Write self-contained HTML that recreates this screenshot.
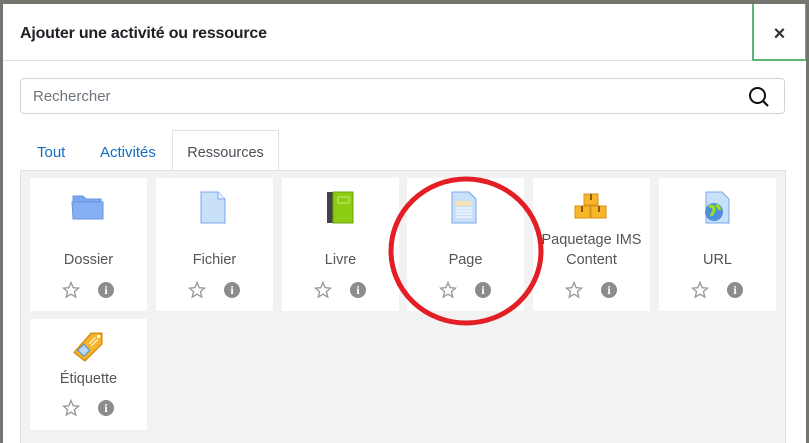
<!DOCTYPE html>
<html><head><meta charset="utf-8"><style>
*{box-sizing:border-box;margin:0;padding:0}
html,body{width:809px;height:443px;overflow:hidden}
body{background:#74756f;font-family:"Liberation Sans",sans-serif;position:relative}
.modal{position:absolute;left:3px;top:4px;width:803px;height:439px;background:#fff;overflow:hidden}
.abs{position:absolute}
.title{left:17px;top:21px;font-size:16px;font-weight:bold;color:#1d2125;letter-spacing:-0.2px}
.hdr{left:0;top:56px;width:803px;height:1px;background:#dee2e6}
.close{left:749px;top:-2px;width:55px;height:59px;border:2px solid #5fb377;font-size:20px;color:#333;text-align:center;line-height:60px;font-weight:bold}
.search{left:17px;top:74px;width:765px;height:36px;border:1px solid #ced4da;border-radius:4px}
.search span{position:absolute;left:12px;top:9px;font-size:15px;color:#6c757d}
.tab{top:129px;height:40px;font-size:15px;color:#0f6cbf;line-height:40px}
.tabA{left:169px;top:126px;width:107px;height:41px;border:1px solid #dee2e6;border-bottom:none;background:#fff;color:#495057;text-align:center;font-size:14.5px;line-height:44px}
.panel{left:17px;top:166px;width:766px;height:290px;background:#f2f2f2;border:1px solid #dee2e6}
.card{position:absolute;width:117px;height:133px;background:#fff}
.card .lbl{position:absolute;left:0;width:100%;text-align:center;font-size:14.5px;color:#555;line-height:20px}
.card .ic{position:absolute;left:42px;top:12px}
.star{position:absolute;top:103px;left:32px}
.info{position:absolute;top:104px;left:68px;width:16px;height:16px;border-radius:50%;background:#8c8c8c;color:#fff;font-size:12px;font-weight:bold;text-align:center;line-height:16px;font-family:"Liberation Serif",serif}
</style></head><body>
<div class="modal">
<div class="abs title">Ajouter une activité ou ressource</div>
<div class="abs hdr"></div>
<div class="abs close">×</div>
<div class="abs search"><span>Rechercher</span>
<svg style="position:absolute;right:14px;top:7px" width="22" height="22" viewBox="0 0 22 22"><circle cx="9.5" cy="9.5" r="7.5" fill="none" stroke="#111" stroke-width="2"/><line x1="15" y1="15" x2="20" y2="20" stroke="#111" stroke-width="2.2"/></svg></div>
<div class="abs tab" style="left:34px">Tout</div>
<div class="abs tab" style="left:97px">Activités</div>
<div class="abs tabA">Ressources</div>
<div class="abs panel"></div>
</div>

<div class="card" style="left:30px;top:178px">
<svg class="ic" style="left:41px;top:15px" width="34" height="28" viewBox="0 0 34 28"><path d="M2 3h10l3 3h15v20H2z" fill="#7aa7ef" stroke="#6a95e0"/><path d="M1 9h31v17H2z" fill="#86b0f3" stroke="#6a95e0"/></svg>
<div class="lbl" style="top:72px">Dossier</div>
<svg class="star" width="18" height="18" viewBox="0 0 24 24"><path d="M12 2l2.9 6.9 7.1.6-5.4 4.7 1.7 7.3L12 17.6 5.7 21.5l1.7-7.3L2 9.5l7.1-.6z" fill="none" stroke="#999" stroke-width="1.8"/></svg><div class="info">i</div></div>

<div class="card" style="left:156px;top:178px">
<svg class="ic" width="32" height="34" viewBox="0 0 32 34"><path d="M3 2h17l7 7v24H3z" fill="#c8e0f8" stroke="#7aa7ef"/><path d="M20 2v7h7" fill="#e6f0fc" stroke="#7aa7ef"/></svg>
<div class="lbl" style="top:72px">Fichier</div>
<svg class="star" width="18" height="18" viewBox="0 0 24 24"><path d="M12 2l2.9 6.9 7.1.6-5.4 4.7 1.7 7.3L12 17.6 5.7 21.5l1.7-7.3L2 9.5l7.1-.6z" fill="none" stroke="#999" stroke-width="1.8"/></svg><div class="info">i</div></div>

<div class="card" style="left:282px;top:178px">
<svg class="ic" width="32" height="34" viewBox="0 0 32 34"><rect x="3" y="2" width="8" height="31" fill="#444"/><rect x="9" y="2" width="20" height="31" fill="#8ccc12" stroke="#6aa50c"/><rect x="14" y="7" width="11" height="6" fill="none" stroke="#c7ef75"/></svg>
<div class="lbl" style="top:72px">Livre</div>
<svg class="star" width="18" height="18" viewBox="0 0 24 24"><path d="M12 2l2.9 6.9 7.1.6-5.4 4.7 1.7 7.3L12 17.6 5.7 21.5l1.7-7.3L2 9.5l7.1-.6z" fill="none" stroke="#999" stroke-width="1.8"/></svg><div class="info">i</div></div>

<div class="card" style="left:407px;top:178px">
<svg class="ic" width="32" height="34" viewBox="0 0 32 34"><path d="M3 2h17l7 7v24H3z" fill="#c8e0f8" stroke="#7aa7ef"/><rect x="7" y="11" width="16" height="5" fill="#f6e3b5"/><path d="M7 18h16M7 21h16M7 24h16M7 27h16" stroke="#fff"/></svg>
<div class="lbl" style="top:72px">Page</div>
<svg class="star" width="18" height="18" viewBox="0 0 24 24"><path d="M12 2l2.9 6.9 7.1.6-5.4 4.7 1.7 7.3L12 17.6 5.7 21.5l1.7-7.3L2 9.5l7.1-.6z" fill="none" stroke="#999" stroke-width="1.8"/></svg><div class="info">i</div></div>

<div class="card" style="left:533px;top:178px">
<svg class="ic" style="left:41px;top:14px" width="34" height="28" viewBox="0 0 34 28"><rect x="10" y="2" width="14" height="11" fill="#f7b52a" stroke="#d9901a"/><rect x="1" y="14" width="15" height="12" fill="#f7b52a" stroke="#d9901a"/><rect x="17" y="14" width="15" height="12" fill="#f7b52a" stroke="#d9901a"/><path d="M17 2v6M8 14v6M25 14v6" stroke="#8a5a10" stroke-width="2"/></svg>
<div class="lbl" style="top:52px">Paquetage IMS<br>Content</div>
<svg class="star" width="18" height="18" viewBox="0 0 24 24"><path d="M12 2l2.9 6.9 7.1.6-5.4 4.7 1.7 7.3L12 17.6 5.7 21.5l1.7-7.3L2 9.5l7.1-.6z" fill="none" stroke="#999" stroke-width="1.8"/></svg><div class="info">i</div></div>

<div class="card" style="left:659px;top:178px">
<svg class="ic" width="32" height="34" viewBox="0 0 32 34"><path d="M5 2h16l7 7v24H5z" fill="#c8e0f8" stroke="#7aa7ef"/><circle cx="13" cy="22" r="9" fill="#4f8fe0"/><path d="M8 17c3-2 5 0 5 3s-3 3-2 6M15 15c2 1 4 3 3 5" stroke="#9be01a" stroke-width="3" fill="none"/></svg>
<div class="lbl" style="top:72px">URL</div>
<svg class="star" width="18" height="18" viewBox="0 0 24 24"><path d="M12 2l2.9 6.9 7.1.6-5.4 4.7 1.7 7.3L12 17.6 5.7 21.5l1.7-7.3L2 9.5l7.1-.6z" fill="none" stroke="#999" stroke-width="1.8"/></svg><div class="info">i</div></div>

<div class="card" style="left:30px;top:319px;height:111px">
<svg class="ic" style="left:40px;top:10px" width="36" height="34" viewBox="0 0 34 32"><path d="M4 22L20 4h10v10L14 30z" fill="#f7b52a" stroke="#d9901a" stroke-width="1.5"/><rect x="9" y="16" width="8" height="8" transform="rotate(-45 13 20)" fill="#bcd8f7" stroke="#4f8fe0"/><circle cx="27" cy="7" r="1.5" fill="#fff"/><path d="M18 14l6-6M20 16l6-6" stroke="#fff"/></svg>
<div class="lbl" style="top:50px">Étiquette</div>
<svg class="star" style="top:80px" width="18" height="18" viewBox="0 0 24 24"><path d="M12 2l2.9 6.9 7.1.6-5.4 4.7 1.7 7.3L12 17.6 5.7 21.5l1.7-7.3L2 9.5l7.1-.6z" fill="none" stroke="#999" stroke-width="1.8"/></svg><div class="info" style="top:81px">i</div></div>

<svg class="abs" style="left:0;top:0" width="809" height="443"><ellipse cx="466" cy="251" rx="75" ry="72" fill="none" stroke="#e31e25" stroke-width="5"/></svg>
</body></html>
